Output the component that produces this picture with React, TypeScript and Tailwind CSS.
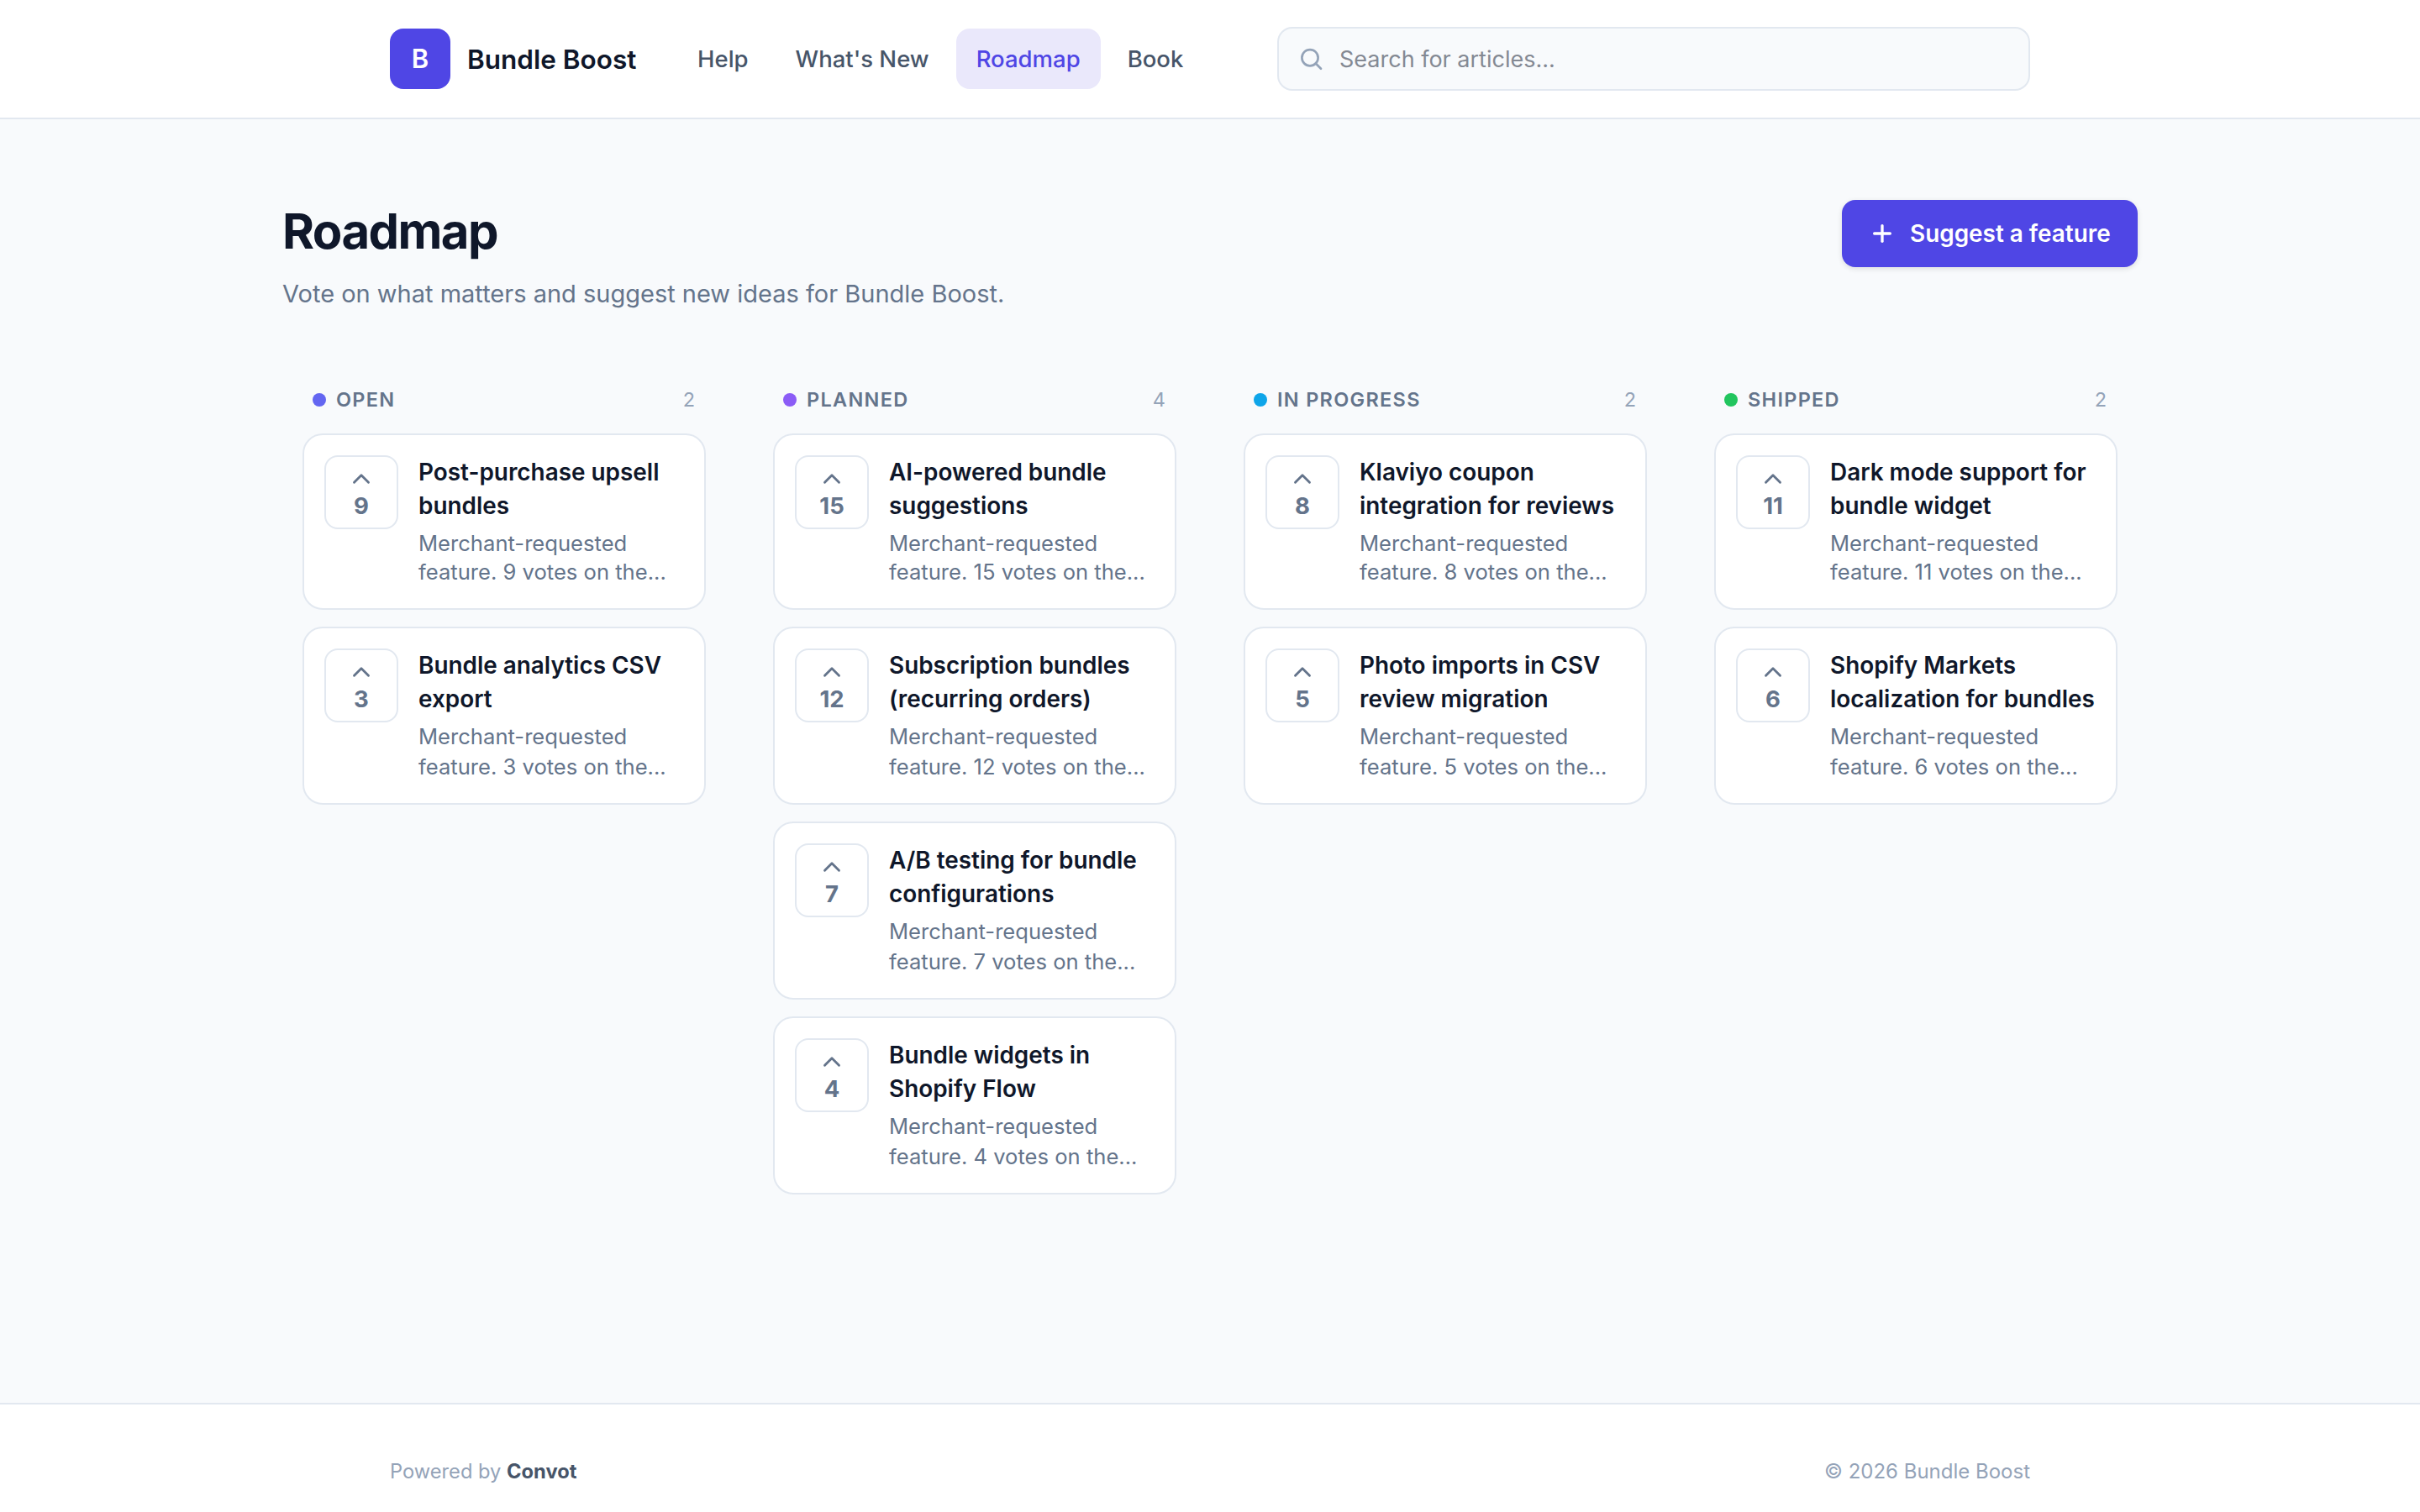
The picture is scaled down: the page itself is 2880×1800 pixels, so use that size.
import { ChevronUp, Plus } from 'lucide-react';

const navLinks = [
  { label: 'Help' },
  { label: "What's New" },
  { label: 'Roadmap', active: true },
  { label: 'Book' },
];

const columns = [
  {
    name: 'Open',
    dot: 'bg-[#6366f1]',
    items: [
      { title: 'Post-purchase upsell bundles', votes: 9 },
      { title: 'Bundle analytics CSV export', votes: 3 },
    ],
  },
  {
    name: 'Planned',
    dot: 'bg-[#8b5cf6]',
    items: [
      { title: 'AI-powered bundle suggestions', votes: 15 },
      { title: 'Subscription bundles (recurring orders)', votes: 12 },
      { title: 'A/B testing for bundle configurations', votes: 7 },
      { title: 'Bundle widgets in Shopify Flow', votes: 4 },
    ],
  },
  {
    name: 'In progress',
    dot: 'bg-[#0ea5e9]',
    items: [
      { title: 'Klaviyo coupon integration for reviews', votes: 8 },
      { title: 'Photo imports in CSV review migration', votes: 5 },
    ],
  },
  {
    name: 'Shipped',
    dot: 'bg-[#22c55e]',
    items: [
      { title: 'Dark mode support for bundle widget', votes: 11 },
      { title: 'Shopify Markets localization for bundles', votes: 6 },
    ],
  },
];

const SearchIcon = () => (
  <svg className="size-8 shrink-0 text-[#94a3b8]" viewBox="0 0 32 32" fill="none" stroke="currentColor" strokeWidth="2.7" strokeLinecap="round">
    <circle cx="15" cy="14.7" r="9.6" />
    <path d="M21.8 21.5 28 27.7" />
  </svg>
);

const Header = () => (
  <header className="h-[142px] bg-white border-b-2 border-[#e2e8f0]">
    <div className="w-[1952px] h-full mx-auto flex items-center">
      <div className="flex items-center gap-5 w-[342px]">
        <div className="size-[72px] rounded-[16px] bg-[#4f46e5] text-white text-[31px] font-semibold flex items-center justify-center">
          B
        </div>
        <span className="pt-px text-[31.5px] font-semibold text-[#0f172a] whitespace-nowrap">Bundle Boost</span>
      </div>
      <nav className="flex items-center gap-2 w-[714px]">
        {navLinks.map((link) => (
          <a
            key={link.label}
            className={`h-[72px] px-6 pt-[2px] rounded-[16px] flex items-center text-[27.5px] font-medium whitespace-nowrap ${
              link.active ? 'bg-[#eae8fb] text-[#4f46e5]' : 'text-[#475569]'
            }`}
          >
            {link.label}
          </a>
        ))}
      </nav>
      <div className="w-[896px] h-[76px] rounded-[18px] border-2 border-[#e2e8f0] bg-[#f8fafc] flex items-center gap-[18px] pl-[22px]">
        <SearchIcon />
        <span className="pt-[2px] text-[27px] text-[#848993]">Search for articles...</span>
      </div>
    </div>
  </header>
);

const Card = ({ title, votes, first }: { title: string; votes: number; first: boolean }) => (
  <div
    className={`w-[480px] rounded-[24px] border-2 border-[#e2e8f0] bg-white p-6 flex items-start gap-6 ${
      first ? 'h-[210px]' : 'h-[212px]'
    }`}
  >
    <button className="size-[88px] shrink-0 rounded-[16px] border-2 border-[#e2e8f0] pt-[9px] flex flex-col items-center text-[#64748b]">
      <ChevronUp size={34} strokeWidth={2} className="shrink-0" />
      <span className="text-[27.5px] leading-[30px] font-bold">{votes}</span>
    </button>
    <div className="flex-1 min-w-0">
      <h3 className="-mr-2 text-[27.9px] leading-[40px] font-semibold text-[#0f172a]">{title}</h3>
      <p
        className={`text-[25.6px] text-[#64748b] whitespace-nowrap ${
          first ? 'mt-[8px] leading-[34px]' : 'mt-[7px] leading-[36px]'
        }`}
      >
        Merchant-requested
        <br />
        feature. {votes} votes on the...
      </p>
    </div>
  </div>
);

const Footer = () => (
  <footer className="h-[130px] bg-white border-t-2 border-[#e2e8f0]">
    <div className="w-[1952px] mx-auto pt-16 flex justify-between text-[24px] leading-[32px] text-[#94a3b8]">
      <span className="text-[23.7px]">
        Powered by <span className="font-bold text-[#475569]">Convot</span>
      </span>
      <span>© 2026 Bundle Boost</span>
    </div>
  </footer>
);

export default function App() {
  return (
    <div className="min-h-screen flex flex-col bg-[#f8fafc] font-['Inter','Liberation_Sans',sans-serif]">
      <Header />

      <main className="flex-1 w-[2208px] mx-auto pt-24">
        <div className="flex items-start justify-between h-[136px]">
          <div>
            <h1 className="text-[58px] leading-[74px] font-bold text-[#0f172a] tracking-[-0.027em]">Roadmap</h1>
            <p className="mt-[14px] text-[29px] leading-[48px] text-[#64748b]">
              Vote on what matters and suggest new ideas for Bundle Boost.
            </p>
          </div>
          <button className="w-[352px] h-20 rounded-[16px] bg-[#4f46e5] text-white px-8 flex items-center gap-[17px] shadow-[0_2px_6px_rgba(0,0,0,0.12)]">
            <Plus size={32} strokeWidth={2.5} className="shrink-0" />
            <span className="text-[27.9px] leading-[40px] font-semibold whitespace-nowrap">Suggest a feature</span>
          </button>
        </div>

        <div className="mt-[84px] px-6 flex justify-between">
          {columns.map((column) => (
            <section key={column.name} className="w-[480px]">
              <div className="h-9 px-3 flex items-center gap-3 text-[23.5px]">
                <span className={`size-4 rounded-full ${column.dot}`} />
                <h2 className="font-semibold uppercase tracking-[0.055em] text-[#64748b]">{column.name}</h2>
                <span className="ml-auto mr-px text-[#94a3b8]">{column.items.length}</span>
              </div>
              <div className="mt-[22px] flex flex-col gap-5">
                {column.items.map((item, idx) => (
                  <Card key={item.title} title={item.title} votes={item.votes} first={idx === 0} />
                ))}
              </div>
            </section>
          ))}
        </div>
      </main>

      <Footer />
    </div>
  );
}
